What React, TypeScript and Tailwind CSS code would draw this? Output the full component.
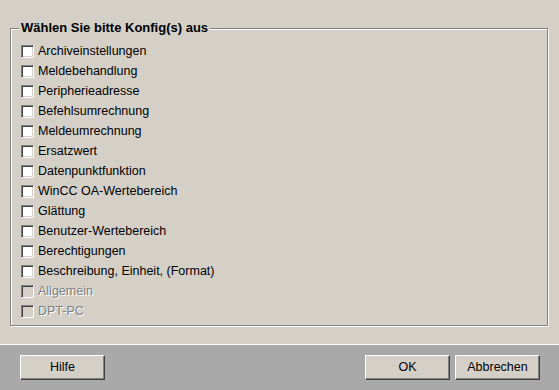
import React from 'react';

const items = [
  { label: 'Archiveinstellungen', disabled: false },
  { label: 'Meldebehandlung', disabled: false },
  { label: 'Peripherieadresse', disabled: false },
  { label: 'Befehlsumrechnung', disabled: false },
  { label: 'Meldeumrechnung', disabled: false },
  { label: 'Ersatzwert', disabled: false },
  { label: 'Datenpunktfunktion', disabled: false },
  { label: 'WinCC OA-Wertebereich', disabled: false },
  { label: 'Glättung', disabled: false },
  { label: 'Benutzer-Wertebereich', disabled: false },
  { label: 'Berechtigungen', disabled: false },
  { label: 'Beschreibung, Einheit, (Format)', disabled: false },
  { label: 'Allgemein', disabled: true },
  { label: 'DPT-PC', disabled: true },
];

const CheckRow: React.FC<{ label: string; disabled: boolean }> = ({ label, disabled }) => (
  <div className="flex items-center h-5">
    <span
      className={`w-[13px] h-[13px] border border-t-[#808080] border-l-[#808080] border-r-white border-b-white shadow-[inset_1px_1px_0_#404040,inset_-1px_-1px_0_#d4d0c8] ${
        disabled ? 'bg-[#d4d0c8]' : 'bg-white'
      }`}
    />
    <span
      className={`ml-[4px] ${
        disabled ? 'text-[#808080] [text-shadow:1px_1px_0_#ffffff]' : 'text-black'
      }`}
    >
      {label}
    </span>
  </div>
);

const Button: React.FC<{ children: React.ReactNode }> = ({ children }) => (
  <button className="w-[85px] h-[25px] bg-[#d4d0c8] border border-t-white border-l-white border-r-[#404040] border-b-[#404040] shadow-[inset_-1px_-1px_0_#808080] text-black text-[12.5px]">
    {children}
  </button>
);

const App: React.FC = () => {
  return (
    <div className="w-[559px] h-[390px] flex flex-col bg-[#d4d0c8] font-['Liberation_Sans',Arial,sans-serif] text-[12.5px] leading-none select-none">
      <div className="h-[345px] border-b border-white pt-[28px] pl-[10px] pr-[11px]">
        <div className="relative h-[298px] border border-[#808080] shadow-[inset_1px_1px_0_#ffffff,1px_1px_0_#ffffff] pt-[12px] pl-[10px]">
          <span className="absolute -top-[8px] left-[8px] px-[2px] bg-[#d4d0c8] font-bold text-[13px] text-black">
            Wählen Sie bitte Konfig(s) aus
          </span>
          {items.map((it) => (
            <CheckRow key={it.label} label={it.label} disabled={it.disabled} />
          ))}
        </div>
      </div>
      <div className="flex-1 bg-[#a9a9a9] flex items-start gap-[5px] pt-[10px] pl-[20px] pr-[19px]">
        <Button>Hilfe</Button>
        <div className="flex-1" />
        <Button>OK</Button>
        <Button>Abbrechen</Button>
      </div>
    </div>
  );
};

export default App;
